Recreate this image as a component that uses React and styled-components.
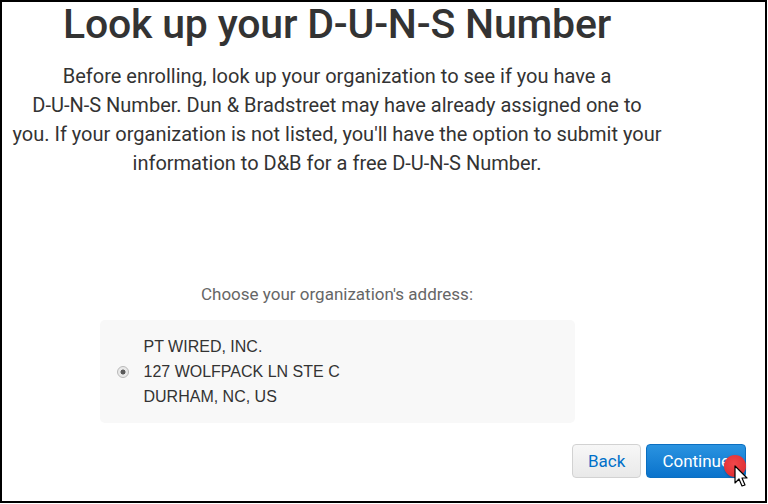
import React from "react";
import styled, { createGlobalStyle } from "styled-components";

const GlobalStyle = createGlobalStyle`
  html, body {
    margin: 0;
    padding: 0;
    background: #fff;
  }
  body {
    font-family: "Roboto", "Liberation Sans", sans-serif;
    color: #333;
  }
`;

const Frame = styled.div`
  box-sizing: border-box;
  width: 767px;
  height: 503px;
  border: 2px solid #000;
  background: #fff;
  display: flex;
  flex-direction: column;
  position: relative;
  overflow: hidden;
`;

const Main = styled.main`
  width: 650px;
  margin-left: 10px;
  text-align: center;
  display: flex;
  flex-direction: column;
  align-items: center;
`;

const Title = styled.h1`
  margin: 0;
  font-family: "Roboto", sans-serif;
  font-weight: 500;
  font-size: 41px;
  line-height: 44px;
  letter-spacing: -0.2px;
  color: #333;
  white-space: nowrap;
`;

const Lead = styled.p`
  margin: 16px 0 0;
  font-size: 20px;
  line-height: 29px;
  color: #333;
  white-space: nowrap;
`;

const Prompt = styled.p`
  margin: 106px 0 0;
  font-size: 17px;
  line-height: 20px;
  color: #666;
`;

const Card = styled.label`
  box-sizing: border-box;
  width: 475px;
  margin-top: 16px;
  padding: 14px 17px;
  background: #f8f8f8;
  border-radius: 5px;
  display: flex;
  align-items: center;
  gap: 15px;
  text-align: left;
`;

const Radio = styled.span`
  flex: none;
  width: 12px;
  height: 12px;
  border-radius: 50%;
  box-sizing: border-box;
  border: 1px solid #b9b9b9;
  background: radial-gradient(circle, #5a5a5a 0 2.2px, #e9e9e9 2.8px);
`;

const Address = styled.div`
  font-family: "Liberation Sans", Arial, sans-serif;
  font-size: 16px;
  line-height: 25px;
  color: #333;
`;

const Footer = styled.footer`
  display: flex;
  justify-content: flex-end;
  gap: 5px;
  padding-right: 19px;
  margin-top: 21px;
  position: relative;
`;

const Button = styled.button`
  box-sizing: border-box;
  height: 34px;
  padding: 0 ${(p) => (p.$primary ? "15px" : "15px")};
  border-radius: 4px;
  font-family: "Roboto", sans-serif;
  font-size: 17px;
  cursor: pointer;
  border: 1px solid ${(p) => (p.$primary ? "#0b6fc1" : "#d2d2d2")};
  color: ${(p) => (p.$primary ? "#fff" : "#0070c9")};
  background: ${(p) =>
    p.$primary
      ? "linear-gradient(#2a93e0, #0a73cc)"
      : "linear-gradient(#f7f7f7, #e9e9e9)"};
`;

const Pointer = styled.div`
  position: absolute;
  right: 15px;
  top: 11px;
  width: 26px;
  height: 34px;
  pointer-events: none;
`;

const Dot = styled.span`
  position: absolute;
  left: 0;
  top: 0;
  width: 22px;
  height: 22px;
  border-radius: 50%;
  background: radial-gradient(circle at 45% 40%, #f0474a, #d9262b);
  box-shadow: 0 1px 2px rgba(0, 0, 0, 0.25);
`;

const Arrow = () => (
  <svg
    width="16"
    height="24"
    viewBox="0 0 16 24"
    style={{ position: "absolute", left: 10, top: 10 }}
  >
    <path
      d="M1 1 L1 18 L5 14 L8 21 L11 20 L8 13 L13 13 Z"
      fill="#fff"
      stroke="#000"
      strokeWidth="1.2"
      strokeLinejoin="round"
    />
  </svg>
);

export default function App() {
  return (
    <>
      <GlobalStyle />
      <Frame>
        <Main>
          <Title>Look up your D-U-N-S Number</Title>
          <Lead>
            Before enrolling, look up your organization to see if you have a
            <br />
            D-U-N-S Number. Dun &amp; Bradstreet may have already assigned one to
            <br />
            you. If your organization is not listed, you'll have the option to
            submit your
            <br />
            information to D&amp;B for a free D-U-N-S Number.
          </Lead>
          <Prompt>Choose your organization's address:</Prompt>
          <Card>
            <Radio />
            <Address>
              PT WIRED, INC.
              <br />
              127 WOLFPACK LN STE C
              <br />
              DURHAM, NC, US
            </Address>
          </Card>
        </Main>
        <Footer>
          <Button>Back</Button>
          <Button $primary>Continue</Button>
          <Pointer>
            <Dot />
            <Arrow />
          </Pointer>
        </Footer>
      </Frame>
    </>
  );
}
